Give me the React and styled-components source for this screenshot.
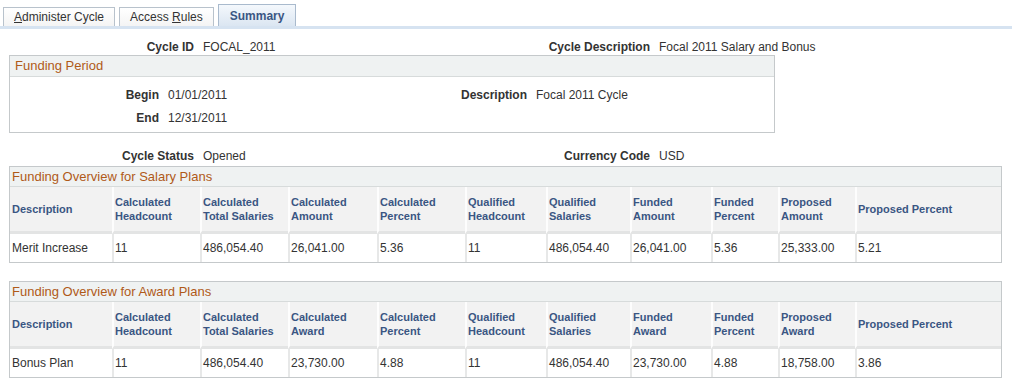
import React from 'react';
import styled, { createGlobalStyle } from 'styled-components';

const GlobalStyle = createGlobalStyle`
  body {
    margin: 0;
    background: #ffffff;
    font-family: "Liberation Sans", Arial, sans-serif;
    font-size: 12px;
    color: #333333;
  }
`;

const Page = styled.div`
  width: 1012px;
`;

const TabBar = styled.div`
  display: flex;
  align-items: flex-end;
  gap: 4px;
  height: 26px;
  padding-left: 3px;
  border-bottom: 3px solid #d6e3f1;
`;

const Tab = styled.div`
  box-sizing: border-box;
  height: ${p => (p.active ? '22px' : '19px')};
  padding: 0 ${p => (p.active ? '11px' : '10px')};
  display: flex;
  align-items: center;
  border: 1px solid ${p => (p.active ? '#a9bacd' : '#b8c2cc')};
  border-bottom: none;
  background: ${p => (p.active ? 'linear-gradient(#f4f8fc, #dbe6f2)' : 'linear-gradient(#ffffff, #f4f4f4)')};
  color: ${p => (p.active ? '#3a5683' : '#333333')};
  font-weight: ${p => (p.active ? 'bold' : 'normal')};
  font-size: 12px;
  white-space: nowrap;

  u {
    text-decoration: underline;
  }
`;

const Content = styled.div`
  padding: 0 10px 0 9px;
`;

const InfoRow = styled.div`
  display: grid;
  grid-template-columns: ${p => p.cols};
  line-height: 16px;
  margin-top: ${p => p.mt || 0}px;
`;

const Label = styled.div`
  font-weight: bold;
  text-align: right;
  padding-right: 9px;
  color: #333333;
  white-space: nowrap;
`;

const Value = styled.div`
  color: #333333;
  white-space: nowrap;
`;

const GroupBox = styled.div`
  width: ${p => p.width}px;
  box-sizing: border-box;
  border: 1px solid #c5c9cb;
  margin-top: ${p => p.mt || 0}px;
`;

const GroupTitle = styled.div`
  height: ${p => p.h || 19}px;
  line-height: ${p => p.h || 19}px;
  padding-left: ${p => p.pl || 2}px;
  background: #eff2f2;
  border-bottom: 1px solid #d7dbdb;
  color: #b05a19;
  font-size: 13px;
`;

const GroupBody = styled.div`
  padding: 10px 0 6px;
  display: flex;
  flex-direction: column;
  gap: 7px;
`;

const Grid = styled.table`
  width: 100%;
  table-layout: fixed;
  border-collapse: separate;
  border-spacing: 0;
`;

const Th = styled.th`
  height: 44px;
  padding: 0 1px 0 2px;
  background: #f2f2f2;
  border-bottom: 3px solid #e3e4e4;
  color: #3a5683;
  font-size: 11px;
  font-weight: bold;
  line-height: 14px;
  text-align: left;
  vertical-align: middle;

  & + & {
    padding-left: 1px;
    border-left: 2px solid #fdfdfd;
  }
`;

const Td = styled.td`
  height: 28px;
  padding: 0 1px 0 2px;
  color: #333333;
  font-size: 12px;
  vertical-align: middle;
  white-space: nowrap;

  & + & {
    padding-left: 1px;
    border-left: 2px solid #e7e8e8;
  }
`;

const colWidths = [102, 88, 88, 89, 88, 81, 84, 81, 67, 77];

const FundingGrid = ({ title, headers, row, mt }) => (
  <GroupBox width={993} mt={mt}>
    <GroupTitle>{title}</GroupTitle>
    <Grid>
      <colgroup>
        {colWidths.map((w, i) => (
          <col key={i} style={{ width: w }} />
        ))}
        <col />
      </colgroup>
      <thead>
        <tr>
          {headers.map((h, i) => (
            <Th key={i}>
              {h.split('|').map((line, j) => (
                <React.Fragment key={j}>
                  {j > 0 && <br />}
                  {line}
                </React.Fragment>
              ))}
            </Th>
          ))}
        </tr>
      </thead>
      <tbody>
        <tr>
          {row.map((v, i) => (
            <Td key={i}>{v}</Td>
          ))}
        </tr>
      </tbody>
    </Grid>
  </GroupBox>
);

const salaryHeaders = [
  'Description',
  'Calculated|Headcount',
  'Calculated|Total Salaries',
  'Calculated|Amount',
  'Calculated|Percent',
  'Qualified|Headcount',
  'Qualified|Salaries',
  'Funded|Amount',
  'Funded|Percent',
  'Proposed|Amount',
  'Proposed Percent',
];

const awardHeaders = [
  'Description',
  'Calculated|Headcount',
  'Calculated|Total Salaries',
  'Calculated|Award',
  'Calculated|Percent',
  'Qualified|Headcount',
  'Qualified|Salaries',
  'Funded|Award',
  'Funded|Percent',
  'Proposed|Award',
  'Proposed Percent',
];

const topCols = '194px 251px 205px 1fr';

export default function App() {
  return (
    <Page>
      <GlobalStyle />
      <TabBar>
        <Tab><span><u>A</u>dminister Cycle</span></Tab>
        <Tab><span>Access <u>R</u>ules</span></Tab>
        <Tab active>Summary</Tab>
      </TabBar>
      <Content>
        <InfoRow cols={topCols} mt={10}>
          <Label>Cycle ID</Label>
          <Value>FOCAL_2011</Value>
          <Label>Cycle Description</Label>
          <Value>Focal 2011 Salary and Bonus</Value>
        </InfoRow>

        <GroupBox width={766}>
          <GroupTitle h={20} pl={5}>Funding Period</GroupTitle>
          <GroupBody>
            <InfoRow cols="158px 160px 208px 1fr">
              <Label>Begin</Label>
              <Value>01/01/2011</Value>
              <Label>Description</Label>
              <Value>Focal 2011 Cycle</Value>
            </InfoRow>
            <InfoRow cols="158px 160px 208px 1fr">
              <Label>End</Label>
              <Value>12/31/2011</Value>
            </InfoRow>
          </GroupBody>
        </GroupBox>

        <InfoRow cols={topCols} mt={15}>
          <Label>Cycle Status</Label>
          <Value>Opened</Value>
          <Label>Currency Code</Label>
          <Value>USD</Value>
        </InfoRow>

        <FundingGrid
          mt={2}
          title="Funding Overview for Salary Plans"
          headers={salaryHeaders}
          row={['Merit Increase', '11', '486,054.40', '26,041.00', '5.36', '11', '486,054.40', '26,041.00', '5.36', '25,333.00', '5.21']}
        />

        <FundingGrid
          mt={18}
          title="Funding Overview for Award Plans"
          headers={awardHeaders}
          row={['Bonus Plan', '11', '486,054.40', '23,730.00', '4.88', '11', '486,054.40', '23,730.00', '4.88', '18,758.00', '3.86']}
        />
      </Content>
    </Page>
  );
}
